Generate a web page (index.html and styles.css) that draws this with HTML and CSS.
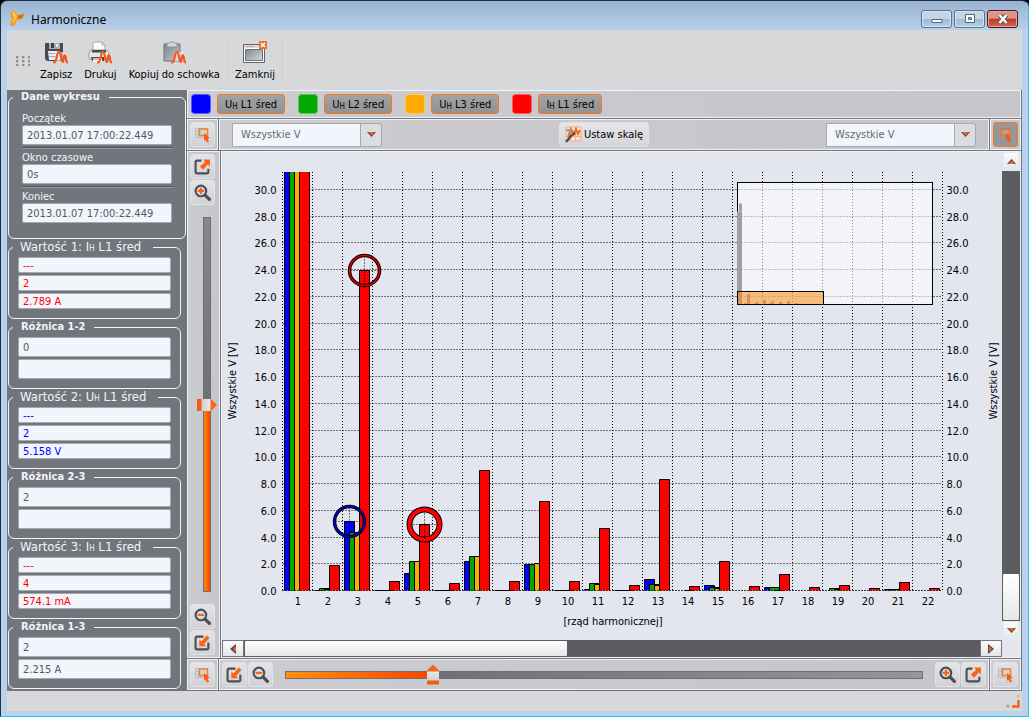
FILE: index.html
```html
<!DOCTYPE html>
<html lang="pl">
<head>
<meta charset="utf-8">
<title>Harmoniczne</title>
<link rel="stylesheet" href="styles.css">
</head>
<body>
<svg class="defs" aria-hidden="true">
  <defs>
    <linearGradient id="gSteel" x1="0" y1="0" x2="1" y2="1"><stop offset="0" stop-color="#7d828b"/><stop offset="1" stop-color="#c3c9d2"/></linearGradient>
    <linearGradient id="gPane" x1="0" y1="0" x2="1" y2="1"><stop offset="0" stop-color="#7e8791"/><stop offset="1" stop-color="#d3dae2"/></linearGradient>
  </defs>
  <symbol id="i-wave" viewBox="0 0 14 13"><path d="M1 11.500C3.500 12 3.500 1.500 5.500 1.500S7.500 11 9 11S9.500 5 11 5s.5 6 2.500 6.500" fill="none" stroke="#f7541a" stroke-width="2" stroke-linecap="round"/></symbol>
  <symbol id="i-save" viewBox="0 0 24 24">
    <path d="M1 2h18v18H3l-2-2z" fill="#474a50"/><path d="M5 2h11v6H5z" fill="#a9adb4"/><path d="M7 2h3v5H7z" fill="#3b3e43"/><path d="M12 3h2v3h-2z" fill="#e6e8eb"/>
    <path d="M4 10h12v9H5z" fill="#eceef1"/><path d="M5 12.500h9M5 15.500h8" stroke="#a6abb3"/>
    <path d="M11 11h10v9H11z" fill="#e9ebee" opacity=".6"/><use href="#i-wave" x="9" y="9" width="15" height="14"/>
  </symbol>
  <symbol id="i-print" viewBox="0 0 24 24">
    <path d="M5 1h9l3 3v6H5z" fill="#fafbfd" stroke="#a4a8b0"/><path d="M14 1v3h3" fill="none" stroke="#a4a8b0"/>
    <path d="M3 9h16l2 3v6H1v-6z" fill="#e4e7ec" stroke="#989da6"/><path d="M4 9h14v2.500H4z" fill="#464a51"/><path d="M3 16h13v4H4z" fill="#4a4d53"/><path d="M5 17h9v4H5z" fill="#f4f5f7"/><path d="M5 18h6" stroke="#f7641e"/>
    <use href="#i-wave" x="9" y="9" width="15" height="14"/>
  </symbol>
  <symbol id="i-copy" viewBox="0 0 24 24">
    <path d="M2 3h16v17H2z" fill="url(#gSteel)" stroke="#6e747e"/><path d="M5 2h2.500q2-3 4.500 0H15v4H5z" fill="#d4d7dc" stroke="#8c9199"/>
    <path d="M12 11h9v9h-9z" fill="#e9ebee" opacity=".7"/><use href="#i-wave" x="9" y="9" width="15" height="14"/>
  </symbol>
  <symbol id="i-close" viewBox="0 0 24 24">
    <path d="M.5 3.500h21v18H.5z" fill="#fff" stroke="#60656d"/><path d="M1 4h20v3H1z" fill="#d9dce1"/><path d="M3 5.500h8" stroke="#eda26a"/><path d="M2.500 8.500h17v11h-17z" fill="url(#gPane)" stroke="#6b727b"/>
    <path d="M16 0h8v8h-8z" fill="#f3722b"/><path d="M18 2l4 4M22 2l-4 4" stroke="#fff" stroke-width="1.500"/>
  </symbol>
  <symbol id="i-select" viewBox="0 0 17 17">
    <path d="M1.500 2v10M4.500 2v10M7.500 2v10M10.500 2v10M1 2.500h12M1 5.500h12M1 8.500h12M1 11.500h10" stroke="#b9bcc2"/>
    <path d="M5.500 3h8v6.500h-8z" fill="#d3d4d8" stroke="#f0812f" stroke-width="1.500"/><path d="M10 7l6 5-2.500.5L15 15.500 13 16.500 11.500 13.500 10 15z" fill="#f85a12"/>
  </symbol>
  <symbol id="i-select-on" viewBox="0 0 17 17">
    <path d="M4.500 3h8v6.500h-8z" fill="#a9a6a6" stroke="#f0712a" stroke-width="1.500"/><path d="M9 7l6 5-2.500.5L14 15.500 12 16.500 10.500 13.500 9 15z" fill="#f85a12"/>
  </symbol>
  <symbol id="i-out" viewBox="0 0 16 16">
    <path d="M7 2.500H3q-1.500 0-1.500 1.500v9q0 1.500 1.500 1.500h9q1.500 0 1.500-1.500V10" fill="none" stroke="#4b4e54" stroke-width="2"/><path d="M8.500 1.500H15V8l-2-2-4.500 5L5.500 8l5-4.500z" fill="#f96312"/>
  </symbol>
  <symbol id="i-in" viewBox="0 0 16 16">
    <path d="M13.500 8v5q0 1.500-1.500 1.500H3q-1.500 0-1.500-1.500V4q0-1.500 1.500-1.500h6" fill="none" stroke="#4b4e54" stroke-width="2"/><path d="M5 11.500V5l2 2 5-5.500L14.500 4 9.500 9.500l2 2z" fill="#f96312"/>
  </symbol>
  <symbol id="i-lens" viewBox="0 0 16 16">
    <circle cx="6.500" cy="6.500" r="5" fill="#d9dadd" stroke="#4b4e54" stroke-width="2"/><path d="M10.500 10.500l4 4" stroke="#4b4e54" stroke-width="3" stroke-linecap="round"/>
  </symbol>
  <symbol id="i-zin" viewBox="0 0 16 16"><use href="#i-lens"/><path d="M3.500 6.500h6M6.500 3.500v6" stroke="#f96312" stroke-width="2"/></symbol>
  <symbol id="i-zout" viewBox="0 0 16 16"><use href="#i-lens"/><path d="M3.500 6.500h6" stroke="#f96312" stroke-width="2"/></symbol>
  <symbol id="i-tri" viewBox="0 0 9 5"><path d="M0 0h9L4.500 5z" fill="#4a4a4e"/><path d="M1.500 0h6L4.500 3.500z" fill="#f7651a"/></symbol>
  <symbol id="i-scale" viewBox="0 0 17 17">
    <path d="M1 1h15v14H1z" fill="#fbe3d0" stroke="#eeb083"/><path d="M5.500 1v14M10.500 1v14M1 5.500h15M1 10.500h15" stroke="#f3b27c"/><path d="M3 11L6 3l3 5 2-5 2 5 2-4" fill="none" stroke="#f26a1a" stroke-width="2"/><path d="M1 16l6-7 3-2" fill="none" stroke="#4c4f55" stroke-width="2.500"/><path d="M1 4h4l2 4" stroke="#9b9ea5" stroke-width="2" fill="none"/>
  </symbol>
</svg>

<div class="window">
  <header class="titlebar">
    <svg class="logo" viewBox="0 0 17 17" aria-hidden="true"><path d="M1 3l4-2 3 4 8-2-3 6-5 1-3 6-4-1 2-6z" fill="#f59b13"/><path d="M3 3l2-1 3 5-3 5-2 2 2-6z" fill="#ffc94a"/><path d="M9 9l4-1 2-4-6 2z" fill="#d86a05"/></svg>
    <h1>Harmoniczne</h1>
    <div class="winbtns">
      <button type="button" aria-label="Minimalizuj"><svg viewBox="0 0 12 10"><path d="M1 5.500h10v3H1z" fill="#fff" stroke="#56677c"/></svg></button>
      <button type="button" aria-label="Maksymalizuj"><svg viewBox="0 0 12 10"><path d="M1.500.5h9v8h-9z" fill="#fff" stroke="#56677c"/><path d="M4.500 3.500h3v2h-3z" fill="#a9c0da" stroke="#56677c"/></svg></button>
      <button type="button" class="x" aria-label="Zamknij okno"><svg viewBox="0 0 12 10"><path d="M2.500 1l7 8M9.500 1l-7 8" stroke="#54585f" stroke-width="4.500"/><path d="M2.500 1l7 8M9.500 1l-7 8" stroke="#fff" stroke-width="2.500"/></svg></button>
    </div>
  </header>

  <div class="client">
    <nav class="toolbar">
      <span class="grip"></span>
      <button type="button"><svg><use href="#i-save"/></svg>Zapisz</button>
      <button type="button"><svg><use href="#i-print"/></svg>Drukuj</button>
      <button type="button"><svg><use href="#i-copy"/></svg>Kopiuj do schowka</button>
      <span class="sep"></span>
      <button type="button"><svg><use href="#i-close"/></svg>Zamknij</button>
      <span class="sep"></span>
    </nav>

    <div class="main">
      <aside class="panel">
        <fieldset class="group wide">
          <legend>Dane wykresu</legend>
          <label for="f-start">Początek</label>
          <input id="f-start" type="text" readonly value="2013.01.07 17:00:22.449">
          <hr>
          <label for="f-win">Okno czasowe</label>
          <input id="f-win" type="text" readonly value="0s">
          <hr>
          <label for="f-end">Koniec</label>
          <input id="f-end" type="text" readonly value="2013.01.07 17:00:22.449">
        </fieldset>
        <fieldset class="group value red">
          <legend>Wartość 1: I<small>H</small> L1 śred</legend>
          <input type="text" aria-label="Wartość 1 czas" readonly value="---">
          <input type="text" aria-label="Wartość 1 rząd" readonly value="2">
          <input type="text" aria-label="Wartość 1" readonly value="2.789 A">
        </fieldset>
        <fieldset class="group">
          <legend>Różnica 1-2</legend>
          <input type="text" aria-label="Różnica 1-2 rząd" readonly value="0">
          <input type="text" aria-label="Różnica 1-2 wartość" readonly value="">
        </fieldset>
        <fieldset class="group value blue">
          <legend>Wartość 2: U<small>H</small> L1 śred</legend>
          <input type="text" aria-label="Wartość 2 czas" readonly value="---">
          <input type="text" aria-label="Wartość 2 rząd" readonly value="2">
          <input type="text" aria-label="Wartość 2" readonly value="5.158 V">
        </fieldset>
        <fieldset class="group">
          <legend>Różnica 2-3</legend>
          <input type="text" aria-label="Różnica 2-3 rząd" readonly value="2">
          <input type="text" aria-label="Różnica 2-3 wartość" readonly value="">
        </fieldset>
        <fieldset class="group value red">
          <legend>Wartość 3: I<small>H</small> L1 śred</legend>
          <input type="text" aria-label="Wartość 3 czas" readonly value="---">
          <input type="text" aria-label="Wartość 3 rząd" readonly value="4">
          <input type="text" aria-label="Wartość 3" readonly value="574.1 mA">
        </fieldset>
        <fieldset class="group">
          <legend>Różnica 1-3</legend>
          <input type="text" aria-label="Różnica 1-3 rząd" readonly value="2">
          <input type="text" aria-label="Różnica 1-3 wartość" readonly value="2.215 A">
        </fieldset>
      </aside>

      <section class="work">
        <div class="cell series">
          <div class="item"><i class="c-blue"></i><button type="button">U<small>H</small> L1 śred</button></div>
          <div class="item"><i class="c-green"></i><button type="button">U<small>H</small> L2 śred</button></div>
          <div class="item"><i class="c-orange"></i><button type="button">U<small>H</small> L3 śred</button></div>
          <div class="item"><i class="c-red"></i><button type="button">I<small>H</small> L1 śred</button></div>
        </div>

        <div class="row">
          <div class="cell corner"><button type="button" class="tool" aria-label="Zaznacz"><svg><use href="#i-select"/></svg></button></div>
          <div class="cell scalebar">
            <div class="combo"><select aria-label="Oś lewa"><option>Wszystkie V</option></select><svg><use href="#i-tri"/></svg></div>
            <button type="button" class="scale"><svg><use href="#i-scale"/></svg>Ustaw skalę</button>
            <div class="combo"><select aria-label="Oś prawa"><option>Wszystkie V</option></select><svg><use href="#i-tri"/></svg></div>
          </div>
          <div class="cell corner"><button type="button" class="tool on" aria-label="Zaznacz" aria-pressed="true"><svg><use href="#i-select-on"/></svg></button></div>
        </div>

        <div class="row body">
          <div class="cell side">
            <button type="button" class="tool" aria-label="Powiększ maksymalnie"><svg><use href="#i-out"/></svg></button>
            <button type="button" class="tool" aria-label="Powiększ"><svg><use href="#i-zin"/></svg></button>
            <input type="range" class="vrange" aria-label="Skala pionowa" min="0" max="1000" value="499">
            <button type="button" class="tool" aria-label="Pomniejsz"><svg><use href="#i-zout"/></svg></button>
            <button type="button" class="tool" aria-label="Pokaż całość"><svg><use href="#i-in"/></svg></button>
          </div>
          <div class="chartbox">
            <svg id="chart" class="chart" role="img" aria-label="Wykres harmonicznych"></svg>
            <div class="vscroll">
              <button type="button" aria-label="W górę"><svg class="up"><use href="#i-tri"/></svg></button>
              <div class="track"><span class="thumb"></span></div>
              <button type="button" aria-label="W dół"><svg><use href="#i-tri"/></svg></button>
            </div>
            <div class="hscroll">
              <button type="button" aria-label="W lewo"><svg viewBox="0 0 6 10"><path d="M6 0v10L0 5z" fill="#4a4a4e"/><path d="M6 2v6L3 5z" fill="#f7651a"/></svg></button>
              <div class="track"><span class="thumb"></span></div>
              <button type="button" aria-label="W prawo"><svg viewBox="0 0 6 10"><path d="M0 0v10l6-5z" fill="#4a4a4e"/><path d="M1 2v6l3-3z" fill="#f7651a"/></svg></button>
            </div>
          </div>
        </div>

        <div class="row">
          <div class="cell corner"><button type="button" class="tool" aria-label="Zaznacz"><svg><use href="#i-select"/></svg></button></div>
          <div class="cell zoombar">
            <button type="button" class="tool" aria-label="Pokaż całość"><svg><use href="#i-in"/></svg></button>
            <button type="button" class="tool" aria-label="Pomniejsz"><svg><use href="#i-zout"/></svg></button>
            <input type="range" class="hrange" aria-label="Skala pozioma" min="0" max="1000" value="226">
            <button type="button" class="tool" aria-label="Powiększ"><svg><use href="#i-zin"/></svg></button>
            <button type="button" class="tool" aria-label="Powiększ maksymalnie"><svg><use href="#i-out"/></svg></button>
          </div>
          <div class="cell corner"><button type="button" class="tool" aria-label="Zaznacz"><svg><use href="#i-select"/></svg></button></div>
        </div>
      </section>
    </div>

    <footer class="status"><svg viewBox="0 0 14 14" aria-hidden="true"><path d="M12.500 6v6.500H6" fill="none" stroke="#f0641e" stroke-width="2.500"/><circle cx="12" cy="2" r="1.500" fill="#efb28e"/><circle cx="2" cy="12" r="1.500" fill="#d98a66"/></svg></footer>
  </div>
</div>
<script src="chart.js"></script>
</body>
</html>
```

FILE: styles.css
```css
* { box-sizing: border-box; }
html, body { height: 100%; }
body {
  margin: 0;
  font: 11px/13px "DejaVu Sans Condensed", "Noto Sans", sans-serif;
  color: #000;
  background: #000;
}
button, input, select { font: inherit; color: inherit; margin: 0; }
button { padding: 0; }
small { font-size: 8px; line-height: 8px; }
.defs { position: absolute; width: 0; height: 0; }

.window {
  display: flex;
  flex-direction: column;
  min-height: 100%;
  padding: 0 6px 5px;
  border: 1px solid #1f2f3f;
  border-right-color: #28c4e4;
  border-bottom-color: #28c4e4;
  border-radius: 7px 7px 0 0;
  background: linear-gradient(#98b3d1, #b9d1ea 30px);
}
.titlebar { display: flex; align-items: center; height: 29px; flex: none; padding: 6px 4px 0 2px; }
.logo { width: 17px; height: 17px; margin-right: 5px; }
.titlebar h1 { flex: 1; margin: 0; padding-top: 2px; font: 12px/16px "Noto Sans", sans-serif; }
.winbtns { display: flex; gap: 2px; }
.winbtns button {
  display: flex; align-items: center; justify-content: center;
  width: 31px; height: 18px;
  border: 1px solid #5b708c; border-radius: 3px;
  box-shadow: inset 0 0 0 1px #d6e4f3;
  background: linear-gradient(#c3d5e9 50%, #9db8d6 50%, #b8cfe8);
}
.winbtns .x { border-color: #4a1420; box-shadow: inset 0 0 0 1px #e3a79e; background: linear-gradient(#dd9488 45%, #bb3a25 50%, #d0674f); }
.winbtns svg { width: 12px; height: 10px; }

.client { flex: 1; display: flex; flex-direction: column; min-height: 0; background: #d7d8da; }
.toolbar { display: flex; align-items: center; height: 60px; flex: none; padding: 2px 0 0 9px; }
.grip {
  width: 14px; height: 10px; margin-right: 4px;
  background: radial-gradient(circle at 1px 1px, #8e9093 1px, #d7d8da 2px) 0 0 / 6px 4px;
}
.toolbar button {
  display: flex; flex-direction: column; align-items: center; gap: 3px;
  padding: 0 6px; border: 0; background: none;
}
.toolbar button svg { width: 24px; height: 24px; }
.sep { width: 1px; height: 40px; margin: 0 1px; background: #cdced0; }

.main { flex: 1; display: flex; min-height: 0; }
.panel { width: 180px; flex: none; padding: 0 1px; background: #72757c; }
.group {
  min-width: 0; width: 173px; margin: 0 0 1px; padding: 3px 9px 9px;
  border: 1px solid #f2f4f7; border-radius: 6px;
}
.group:last-child { margin: 0; }
.group.wide { width: 178px; padding: 8px 13px 15px; }
.group legend { margin-left: -5px; height: 14px; padding: 0 9px 0 8px; font-weight: bold; line-height: 14px; color: #f2f4f8; }
.group.wide legend { margin-left: -9px; }
.group.value legend { padding: 0 12px 0 7px; font: 13px/14px "DejaVu Sans Condensed", "Noto Sans", sans-serif; }
.group label { display: block; color: #f2f4f8; line-height: 13px; }
.group input {
  display: block; width: 100%; height: 20px; padding: 0 4px;
  border: 1px solid #a6a9ae; border-radius: 2px;
  background: #f2f5fb; color: #55585e; outline: 0;
}
.group input + input { margin-top: 2px; }
.group.value input { height: 16px; }
.group.red input { color: #f00; }
.group.blue input { color: #00f; }
.group hr { height: 2px; margin: 2px 0; border: 0; background: linear-gradient(#505359 50%, #9a9da3 50%); }

.work { flex: 1; display: flex; flex-direction: column; gap: 1px; min-width: 0; padding: 0 1px 1px 0; background: #72757c; }
.cell { border: 1px solid #f0f2f6; background: linear-gradient(90deg, #cbcbd0, #c5c5ca); }
.series { display: flex; align-items: center; gap: 13px; height: 28px; flex: none; padding-left: 3px; }
.item { display: flex; align-items: center; gap: 6px; }
.item i { width: 20px; height: 20px; border: 1px solid rgba(255, 255, 255, .35); border-radius: 4px; }
.item small { vertical-align: -1px; }
.c-blue { background: #00f; }
.c-green { background: #0a0; }
.c-orange { background: #fa0; }
.c-red { background: #f00; }
.item button { height: 20px; padding: 0 7px; border: 1px solid #f3791d; border-radius: 3px; background: linear-gradient(#a3a3a4, #929294); }

.row { display: flex; gap: 1px; flex: none; }
.corner { width: 31px; height: 31px; padding: 2px; }
.tool {
  display: flex; align-items: center; justify-content: center;
  width: 25px; height: 25px; flex: none;
  border: 1px solid #e2e3e6; border-radius: 3px;
  background: linear-gradient(#e4e4e8, #d2d2d6);
}
.tool svg { width: 17px; height: 17px; }
.tool.on { border: 1px solid #f3791d; background: #97979a; }
.scalebar { flex: 1; display: flex; align-items: center; justify-content: space-between; padding: 0 12px; }
.combo { position: relative; width: 150px; height: 24px; }
.combo select {
  appearance: none; width: 100%; height: 100%; padding: 0 30px 0 8px;
  border: 1px solid #a5a9b0; border-radius: 0 3px 3px 0; color: #666a70;
  background: linear-gradient(90deg, #f2f5fb 127px, #a5a9b0 127px, #a5a9b0 128px, #dcdde0 128px);
}
.combo svg { position: absolute; right: 6px; top: 9px; width: 9px; height: 5px; pointer-events: none; }
.scale {
  display: flex; align-items: center; gap: 2px; height: 25px; padding: 0 5px;
  border: 1px solid #e0e1e4; border-radius: 3px; background: linear-gradient(#e6e6ea, #d5d5d9);
}
.scale svg { width: 17px; height: 17px; }

.body { flex: 1; min-height: 0; }
.side { display: flex; flex-direction: column; align-items: center; width: 33px; gap: 1px; padding: 2px 4px 2px 2px; }
.chartbox {
  flex: 1; display: grid; min-width: 0;
  grid-template: minmax(0, 1fr) 17px / minmax(0, 1fr) 18px;
  border: 1px solid #f0f2f6; background: #e3e6ee;
}
.chart { width: 100%; height: 100%; min-height: 0; font-size: 11px; }

.track { background: #5c5d61; }
.vscroll { grid-row: 1; grid-column: 2; display: flex; flex-direction: column; }
.vscroll .track { flex: 1; display: flex; flex-direction: column; justify-content: flex-end; }
.vscroll .thumb { height: 48px; }
.hscroll { grid-row: 2; grid-column: 1; display: flex; }
.hscroll .track { flex: 1; display: flex; }
.hscroll .thumb { width: 44%; }
.thumb { border: 1px solid #5c5d61; border-radius: 2px; background: linear-gradient(#fff, #e6e7ea); }
.vscroll button, .hscroll button {
  display: flex; align-items: center; justify-content: center; flex: none;
  width: 22px; border: 1px solid #74767b; background: linear-gradient(#fbfbfc, #e4e5e8);
}
.vscroll button { width: 16px; height: 19px; margin-left: 1px; border-color: #e8e9ec; }
.vscroll svg { width: 9px; height: 5px; }
.vscroll .up { transform: rotate(180deg); }
.hscroll svg { width: 6px; height: 10px; }

.zoombar { flex: 1; display: flex; align-items: center; gap: 1px; padding: 0 2px; min-width: 0; }
input[type="range"] { appearance: none; background: none; outline: 0; }
.hrange { flex: 1; min-width: 0; height: 22px; margin: 0 11px; }
.hrange::-webkit-slider-runnable-track {
  height: 8px; border: 1px solid #6c6e74;
  background: linear-gradient(90deg, #ff9010, #f54500 23%, #6d7075 23%, #94969d);
}
.hrange::-webkit-slider-thumb {
  appearance: none; width: 12px; height: 20px; margin-top: -7px;
  clip-path: polygon(50% 0, 100% 30%, 100% 100%, 0 100%, 0 30%);
  background: linear-gradient(#f7651a 6px, #e8e8ec 7px, #cfd0d5 15px, #f55a10 16px);
}
.vrange { flex: 1; align-self: flex-end; min-height: 0; width: 16px; margin: 11px 0; writing-mode: vertical-lr; direction: rtl; }
.vrange::-webkit-slider-runnable-track {
  width: 8px; border: 1px solid #6c6e74;
  background: linear-gradient(#85878e, #6d7075 50%, transparent 50%), linear-gradient(90deg, #ff8a10, #f54500);
}
.vrange::-webkit-slider-thumb {
  appearance: none; width: 20px; height: 12px; margin-left: -7px;
  clip-path: polygon(0 0, 70% 0, 100% 50%, 70% 100%, 0 100%);
  background: linear-gradient(90deg, #f55a10 4px, #cfd0d5 5px, #e8e8ec 13px, #f7651a 14px);
}

.status { display: flex; justify-content: flex-end; align-items: center; height: 20px; flex: none; padding-right: 2px; }
.status svg { width: 14px; height: 14px; }
```

FILE: chart.js
```js
const SERIES = ['#0000ff', '#00aa00', '#ffaa00', '#ff0000'];
const DATA = [
  [230, 230, 230, 240], [0.03, 0.12, 0.1, 1.87], [5.16, 4.33, 4.33, 23.9], [0.03, 0.03, 0.03, 0.67],
  [1.27, 2.16, 2.16, 4.94], [0.03, 0.03, 0.03, 0.53], [2.16, 2.55, 2.55, 9], [0.03, 0.03, 0.03, 0.67],
  [1.95, 1.95, 2.05, 6.68], [0.03, 0.03, 0.03, 0.67], [0.1, 0.5, 0.45, 4.65], [0.03, 0.03, 0.03, 0.35],
  [0.82, 0.42, 0.4, 8.3], [0, 0, 0.03, 0.3], [0.35, 0.2, 0.15, 2.16], [0, 0, 0, 0.28],
  [0.2, 0.2, 0.03, 1.2], [0, 0, 0, 0.2], [0, 0.15, 0.1, 0.38], [0, 0, 0, 0.15],
  [0.05, 0.05, 0.05, 0.6], [0, 0, 0, 0.15]
];
const MAX = 31.3;
const svg = document.getElementById('chart');

function rect(x, y, w, h, attrs) {
  return `<rect x="${x}" y="${y}" width="${w}" height="${h}" ${attrs}/>`;
}
function text(x, y, s, attrs = '') {
  return `<text x="${x}" y="${y}" ${attrs}>${s}</text>`;
}

function draw() {
  const { width, height } = svg.getBoundingClientRect();
  const left = 60.5, right = Math.round(width) - 59.5;
  const top = 20, bottom = Math.round(height) - 49.5;
  const step = (right - left) / DATA.length;
  const unit = (bottom - top) / MAX;
  const snap = v => Math.round(v - 0.5) + 0.5;
  const yOf = v => snap(bottom - v * unit);
  let grid = '', labels = '', out = '';

  for (let i = 0; i <= DATA.length; i++) {
    grid += `M${snap(left + i * step)} ${top}V${bottom}`;
  }
  for (let v = 0; v <= 30; v += 2) {
    const y = yOf(v);
    grid += `M${left} ${y}H${right}`;
    labels += text(left - 6, y + 4, v.toFixed(1), 'text-anchor="end"');
    labels += text(right + 4, y + 4, v.toFixed(1));
  }
  out += `<path d="${grid}" stroke="#000" stroke-dasharray="1 2" fill="none"/>` + labels;

  DATA.forEach((vals, n) => {
    const x0 = snap(left + n * step) + 2;
    vals.forEach((v, s) => {
      if (!v) return;
      const y = v > MAX ? top : yOf(v);
      const x = x0 + s * 5;
      out += rect(x, y, 10, bottom - y, `fill="${SERIES[s]}"`);
      out += `<path d="M${x} ${bottom}V${y}${v > MAX ? 'm10 0' : 'h10'}V${bottom}" fill="none" stroke="#000"/>`;
    });
    out += text(Math.round(left + (n + 0.5) * step), bottom + 14, n + 1, 'text-anchor="middle"');
  });
  out += `<path d="M${left} ${bottom}H${right}" stroke="#000" stroke-dasharray="1 2"/>`;

  const mid = Math.round((left + right) / 2);
  const vmid = Math.round((top + bottom) / 2);
  out += text(mid, bottom + 34, '[rząd harmonicznej]', 'text-anchor="middle"');
  out += text(0, 0, 'Wszystkie V [V]', `text-anchor="middle" transform="translate(14 ${vmid}) rotate(-90)"`);
  out += text(0, 0, 'Wszystkie V [V]', `text-anchor="middle" transform="translate(${right + 54} ${vmid}) rotate(-90)"`);

  [[3, 0, '#0000cc', 1.5], [3, 3, '#dd0000', 1.5], [5, 3, '#ff0000', 4]].forEach(([n, s, color, w]) => {
    const cx = snap(left + (n - 1) * step) + 7 + s * 5;
    const cy = yOf(DATA[n - 1][s]);
    out += `<g fill="none"><circle cx="${cx}" cy="${cy}" r="15" stroke="#000" stroke-width="${w + 2}"/>` +
      `<circle cx="${cx}" cy="${cy}" r="15" stroke="${color}" stroke-width="${w}"/>` +
      `<path d="M${cx - 14} ${cy}h28M${cx} ${cy - 14}v28" stroke="#000" stroke-dasharray="1 2"/></g>`;
  });

  // overview map
  const mx = right - 205, my = top + 10.5;
  out += rect(mx, my, 195, 122, 'fill="#fff" fill-opacity=".55" stroke="#000"');
  out += rect(mx - 0.5, my + 29, 5, 93, 'fill="#a09fa3"') + rect(mx + 1.5, my + 21, 3, 8, 'fill="#a09fa3"');
  [[6, 1], [9, 10], [16, 1], [18, 2], [25, 4], [31, 1], [33, 3], [41, 2], [49, 3], [57, 1]].forEach(([x, h]) => {
    out += rect(mx + x + 0.5, my + 121.5 - h, 3, h, 'fill="#a09fa3"');
  });
  out += rect(mx, my + 109, 86, 13, 'fill="#ff8a1c" fill-opacity=".55" stroke="#000"');
  svg.innerHTML = out;
}
draw();
window.addEventListener('resize', draw);
```
